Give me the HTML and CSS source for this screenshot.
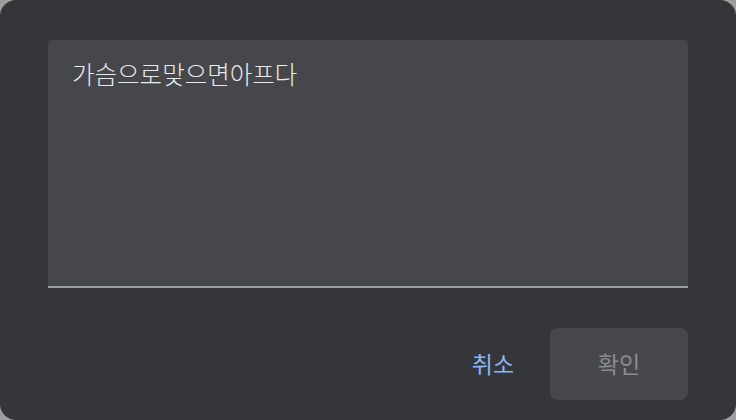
FILE: index.html
```html
<!DOCTYPE html>
<html lang="ko">
<head>
<meta charset="utf-8">
<link rel="stylesheet" href="styles.css">
</head>
<body>
<div class="dialog">
  <div class="field">
    <div class="field-text">가슴으로맞으면아프다</div>
  </div>
  <div class="actions">
    <button class="btn btn-cancel">취소</button>
    <button class="btn btn-ok">확인</button>
  </div>
</div>
</body>
</html>
```
FILE: styles.css
```css
html, body {
  margin: 0;
  padding: 0;
  background: #9e9e9e;
}
body {
  width: 736px;
  height: 420px;
  font-family: "Noto Sans CJK KR", "Noto Sans", sans-serif;
}
.dialog {
  box-sizing: border-box;
  width: 736px;
  height: 420px;
  background: #35363a;
  border-radius: 16px;
  padding: 40px 48px 20px;
  display: flex;
  flex-direction: column;
}
.field {
  box-sizing: border-box;
  height: 248px;
  background: #46474b;
  border-radius: 4px 4px 0 0;
  border-bottom: 2px solid #9aa0a6;
  padding: 19px 24px;
}
.field-text {
  color: #e8eaed;
  font-size: 24.5px;
  font-weight: 300;
  line-height: 30px;
}
.actions {
  margin-top: 40px;
  display: flex;
  justify-content: flex-end;
  align-items: center;
  gap: 24px;
}
.btn {
  font-family: "Noto Sans CJK KR", "Noto Sans", sans-serif;
  font-size: 23px;
  border: none;
  height: 72px;
  border-radius: 8px;
  padding: 0 0 3px;
  background: transparent;
}
.btn-cancel {
  color: #8ab4f8;
  width: 90px;
  margin-right: -12px;
}
.btn-ok {
  width: 138px;
  background: #47484c;
  color: #8b8c8f;
}
```
